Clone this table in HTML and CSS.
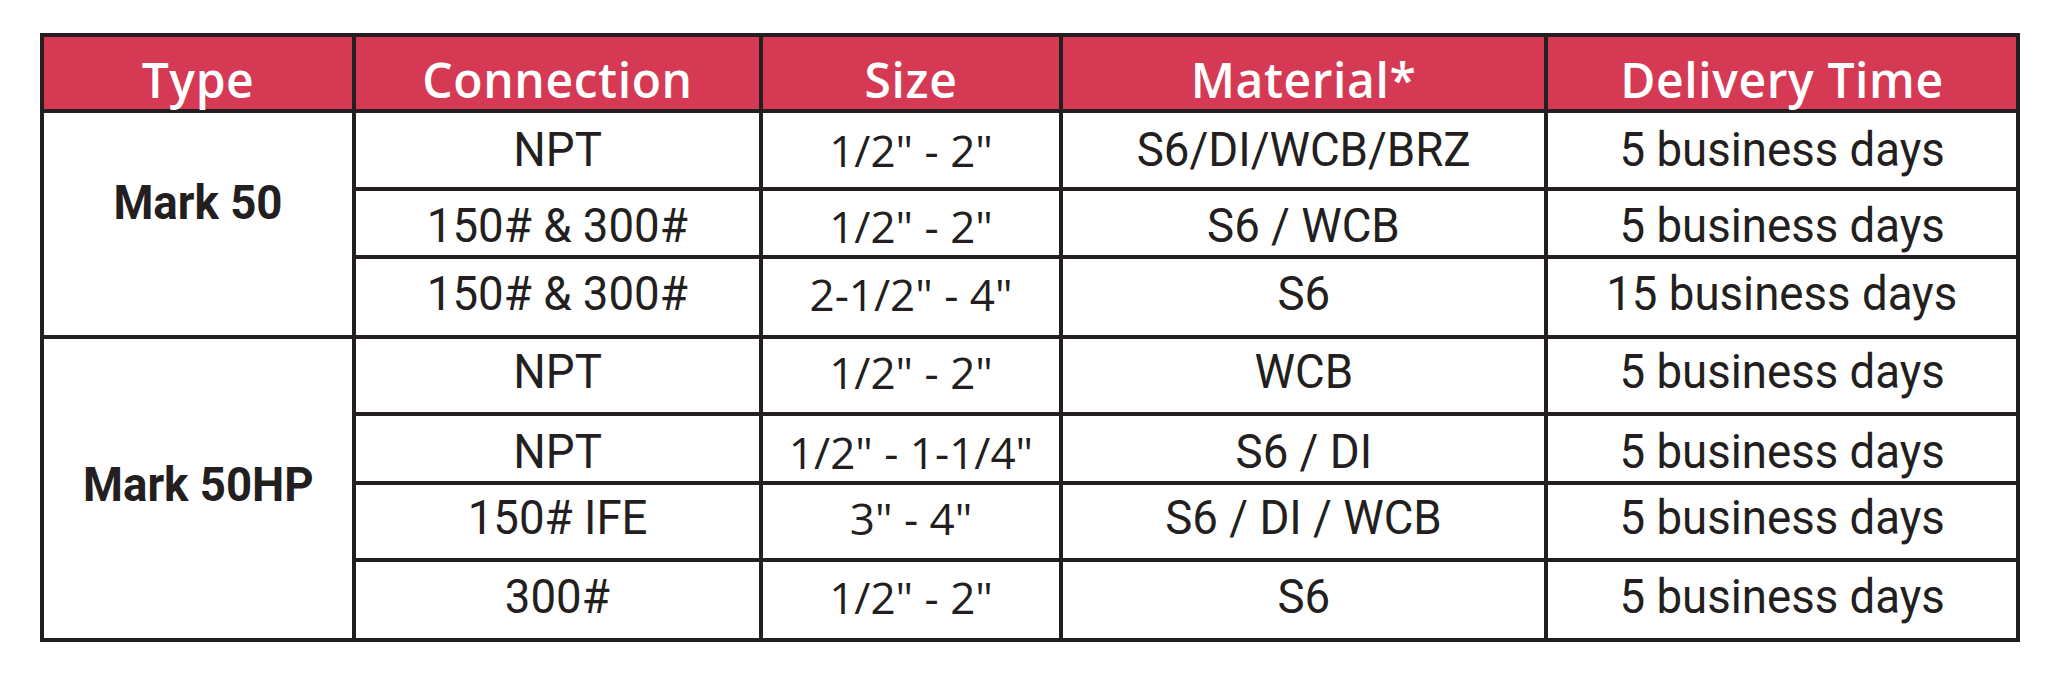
FILE: index.html
```html
<!DOCTYPE html>
<html lang="en">
<head>
<meta charset="utf-8">
<title>Delivery Times</title>
<link rel="stylesheet" href="styles.css">
</head>
<body>
<div class="sheet">
  <div class="grid">
    <div class="hd">Type</div>
    <div class="hd">Connection</div>
    <div class="hd">Size</div>
    <div class="hd">Material*</div>
    <div class="hd">Delivery Time</div>

    <div class="type type-a"><span class="tx">Mark 50</span></div>
    <div class="c"><span class="tx">NPT</span></div>
    <div class="c sz">1/2" - 2"</div>
    <div class="c"><span class="tx">S6/DI/WCB/BRZ</span></div>
    <div class="c"><span class="tx">5 business days</span></div>

    <div class="c dn"><span class="tx">150# &amp; 300#</span></div>
    <div class="c sz dn">1/2" - 2"</div>
    <div class="c dn"><span class="tx">S6 / WCB</span></div>
    <div class="c dn"><span class="tx">5 business days</span></div>

    <div class="c up"><span class="tx">150# &amp; 300#</span></div>
    <div class="c sz up">2-1/2" - 4"</div>
    <div class="c up"><span class="tx">S6</span></div>
    <div class="c up"><span class="tx">15 business days</span></div>

    <div class="type type-b"><span class="tx">Mark 50HP</span></div>
    <div class="c up"><span class="tx">NPT</span></div>
    <div class="c sz up">1/2" - 2"</div>
    <div class="c up"><span class="tx">WCB</span></div>
    <div class="c up"><span class="tx">5 business days</span></div>

    <div class="c dn"><span class="tx">NPT</span></div>
    <div class="c sz dn">1/2" - 1-1/4"</div>
    <div class="c dn"><span class="tx">S6 / DI</span></div>
    <div class="c dn"><span class="tx">5 business days</span></div>

    <div class="c up"><span class="tx">150# IFE</span></div>
    <div class="c sz up">3" - 4"</div>
    <div class="c up"><span class="tx">S6 / DI / WCB</span></div>
    <div class="c up"><span class="tx">5 business days</span></div>

    <div class="c up"><span class="tx">300#</span></div>
    <div class="c sz up">1/2" - 2"</div>
    <div class="c up"><span class="tx">S6</span></div>
    <div class="c up"><span class="tx">5 business days</span></div>
  </div>
</div>
</body>
</html>
```
FILE: styles.css
```css
* { box-sizing: border-box; }
html, body { margin: 0; padding: 0; background: #ffffff; }
body { width: 2056px; height: 682px; overflow: hidden; }

.sheet {
  padding: 33px 36px 0 40px;
}

.grid {
  display: grid;
  width: 1980px;
  grid-template-columns: 308px 403px 296px 481px 468px;
  grid-template-rows: 72px 74px 64px 76px 73px 65px 73px 76px;
  gap: 4px;
  padding: 4px;
  background: #231f20;
  color: #231f20;
}

.hd {
  background: #d63954;
  color: #ffffff;
  font-family: "Open Sans", "Liberation Sans", sans-serif;
  font-weight: 600;
  font-size: 48px;
  letter-spacing: 0.6px;
  display: flex;
  align-items: center;
  justify-content: center;
  padding-top: 13px;
  line-height: 1;
}

.c, .type {
  background: #ffffff;
  display: flex;
  align-items: center;
  justify-content: center;
  font-family: Roboto, "Liberation Sans", sans-serif;
  font-size: 48px;
  line-height: 1;
}

.up { padding-bottom: 7px; }
.dn { padding-top: 6px; }

.tx {
  display: inline-block;
  transform: scaleX(0.95);
  white-space: nowrap;
}

.sz {
  font-family: "Open Sans", "Liberation Sans", sans-serif;
  font-weight: 500;
  font-size: 44px;
}

.type {
  font-weight: 700;
  grid-column: 1;
}
.type-a { grid-row: 2 / span 3; padding-bottom: 42px; }
.type-b { grid-row: 5 / span 4; padding-bottom: 8px; }
```
